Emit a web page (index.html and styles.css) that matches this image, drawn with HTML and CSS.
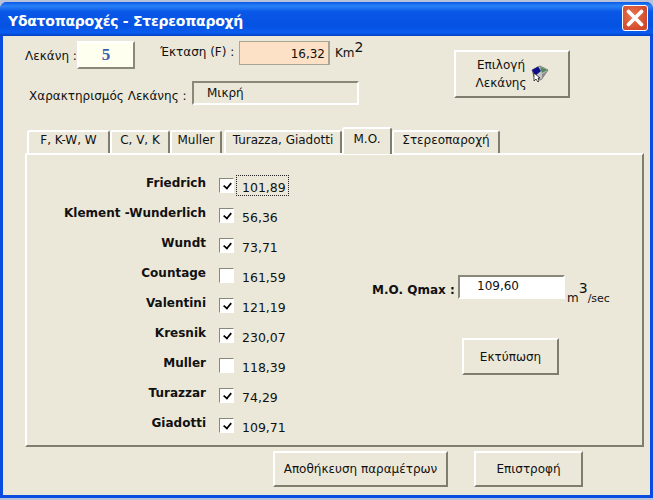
FILE: index.html
```html
<!DOCTYPE html>
<html lang="el">
<head>
  <meta charset="UTF-8" />
  <title>Υδατοπαροχές - Στερεοπαροχή</title>
  <link rel="stylesheet" href="styles.css">
</head>
<body>
  <div class="window">
    <div class="titlebar">
      <span class="title">Υδατοπαροχές - Στερεοπαροχή</span>
      <button class="close">
        <svg width="20" height="20" viewBox="0 0 20 20"><path d="M3.5 3.5 L16.5 16.5 M16.5 3.5 L3.5 16.5" stroke="#fff" stroke-width="3.8" stroke-linecap="round"/></svg>
      </button>
    </div>

    <div class="form">
      <div class="top">
        <div class="top-fields">
          <div class="line-one">
            <span class="lbl-basin">Λεκάνη :</span>
            <div class="basin-no">5</div>
            <span class="lbl-area">Έκταση (F) :</span>
            <div class="area">16,32</div>
            <span class="km">Km<sup>2</sup></span>
          </div>
          <div class="line-two">
            <span class="lbl-type">Χαρακτηρισμός Λεκάνης :</span>
            <div class="type">Μικρή</div>
          </div>
        </div>
        <button class="btn pick">
          <span>Επιλογή<br>Λεκάνης</span>
          <svg width="18" height="18" viewBox="0 0 18 18">
            <path d="M1 5 L9 1 L17 5 L10 15 L3 12 Z" fill="#c4c4c4" stroke="#444" stroke-width="0.6"/>
            <path d="M1 5 L7 1.5 L10 6 L4 11 Z" fill="#10108c"/>
            <path d="M9 2 L16.5 5 L11 8 Z" fill="#4c8a5a"/>
            <path d="M11 9 L16.5 6 L11 14 Z" fill="#8a8a8a"/>
            <path d="M3 8 L3 16 L5 14 L7 17 L8 16 L7 13 L9 13 Z" fill="#fff" stroke="#000" stroke-width="0.7"/>
          </svg>
        </button>
      </div>

      <div class="tabs">
        <div class="tab tab-a">F, K-W, W</div>
        <div class="tab tab-b">C, V, K</div>
        <div class="tab tab-c">Muller</div>
        <div class="tab tab-d">Turazza, Giadotti</div>
        <div class="tab tab-e active">M.O.</div>
        <div class="tab tab-f">Στερεοπαροχή</div>
      </div>

      <div class="page">
        <div class="list">
          <div class="row"><b>Friedrich</b><i class="check on"></i><span class="val focus">101,89</span></div>
          <div class="row"><b>Klement -Wunderlich</b><i class="check on"></i><span class="val">56,36</span></div>
          <div class="row"><b>Wundt</b><i class="check on"></i><span class="val">73,71</span></div>
          <div class="row"><b>Countage</b><i class="check"></i><span class="val">161,59</span></div>
          <div class="row"><b>Valentini</b><i class="check on"></i><span class="val">121,19</span></div>
          <div class="row"><b>Kresnik</b><i class="check on"></i><span class="val">230,07</span></div>
          <div class="row"><b>Muller</b><i class="check"></i><span class="val">118,39</span></div>
          <div class="row"><b>Turazzar</b><i class="check on"></i><span class="val">74,29</span></div>
          <div class="row"><b>Giadotti</b><i class="check on"></i><span class="val">109,71</span></div>
        </div>
        <div class="result">
          <div class="qmax">
            <b>M.O. Qmax :</b>
            <div class="qmax-val">109,60</div>
            <span class="unit">m<sup>3</sup><small>/sec</small></span>
          </div>
          <button class="btn print">Εκτύπωση</button>
        </div>
      </div>

      <div class="actions">
        <button class="btn save">Αποθήκευση παραμέτρων</button>
        <button class="btn back">Επιστροφή</button>
      </div>
    </div>
  </div>
</body>
</html>
```

FILE: styles.css
```css
* { box-sizing: border-box; }

html, body {
  margin: 0;
  height: 500px;
  overflow: hidden;
}

body {
  background: #b8c2da;
  font-family: "DejaVu Sans", sans-serif;
  font-size: 12px;
  color: #111;
  padding-top: 2px;
}

.window {
  width: 653px;
  height: 496px;
  background: #0a4be0;
  border-radius: 7px 7px 0 0;
  padding: 0 3px 3px 3px;
}

/* Title bar */
.titlebar {
  height: 34px;
  margin: 0 -3px;
  padding: 0 5px 0 8px;
  border-radius: 7px 7px 0 0;
  background: linear-gradient(#0a5ae6 0%, #2a82f6 12%, #0a58e8 28%, #0552e2 70%, #0a5cf0 90%, #0340c4 100%);
  display: flex;
  align-items: center;
  justify-content: space-between;
}

.title {
  color: #fff;
  font-size: 14px;
  font-weight: bold;
  letter-spacing: -0.26px;
  padding-top: 3px;
}

.close {
  width: 26px;
  height: 26px;
  padding: 0;
  border: 1px solid #fff;
  border-radius: 3px;
  background: radial-gradient(circle at 40% 40%, #e8774f, #d2482a 75%);
  display: flex;
  align-items: center;
  justify-content: center;
  margin-top: -3px;
}

/* Form */
.form {
  height: 459px;
  background: #ebe8d9;
  padding: 5px 0 0 22px;
}

.top {
  display: flex;
  height: 82px;
}

.top-fields {
  width: 429px;
}

.line-one {
  display: flex;
  align-items: flex-start;
  height: 40px;
}

.lbl-basin { margin-top: 8px; width: 52px; }

.basin-no {
  width: 58px;
  height: 28px;
  background: #fffff0;
  border: 2px solid;
  border-color: #fff #8a8878 #8a8878 #fff;
  color: #3a5fb0;
  font: bold 17px "Liberation Serif", serif;
  text-align: center;
  line-height: 24px;
}

.lbl-area { margin: 4px 0 0 25px; width: 79px; }

.area {
  width: 91px;
  height: 24px;
  background: #fde1c6;
  border: 1px solid #a8a692;
  border-width: 1px 2px 1px 1px;
  text-align: right;
  padding-right: 3px;
  line-height: 24px;
}

.km { margin: 5px 0 0 5px; font-size: 12px; }
.km sup { font-size: 14px; line-height: 0; }

.line-two {
  display: flex;
  align-items: center;
  height: 24px;
  margin-left: 4px;
}

.lbl-type { width: 163px; margin-top: 6px; }

.type {
  width: 167px;
  height: 24px;
  border: 2px solid;
  border-color: #8a8878 #fff #fff #8a8878;
  padding-left: 13px;
  line-height: 20px;
}

.btn {
  background: #ebe8d9;
  border: 2px solid;
  border-color: #fff #7f7d6e #7f7d6e #fff;
  font-family: "DejaVu Sans", sans-serif;
  font-size: 12px;
  color: #111;
  padding: 0;
}

.pick {
  width: 116px;
  height: 48px;
  margin-top: 9px;
  display: flex;
  align-items: center;
  justify-content: center;
  gap: 4px;
  line-height: 18px;
}

/* Tabs */
.tabs {
  display: flex;
  align-items: flex-end;
  height: 30px;
  margin-left: 2px;
}

.tab {
  height: 23px;
  background: #ebe8d9;
  border-top: 2px solid #fff;
  border-left: 2px solid #fff;
  border-right: 2px solid #7f7d6e;
  border-radius: 3px 3px 0 0;
  text-align: center;
  line-height: 17px;
}

.tab-a { width: 83px; }
.tab-b { width: 60px; }
.tab-c { width: 52px; margin-right: 2px; }
.tab-d { width: 118px; }
.tab-e { width: 50px; }
.tab-f { width: 108px; }

.tab.active {
  height: 27px;
  line-height: 20px;
  position: relative;
  top: 1px;
}

/* Tab page */
.page {
  width: 619px;
  height: 294px;
  border: 2px solid;
  border-color: #fff #7f7d6e #7f7d6e #fff;
  display: flex;
}

.list {
  width: 263px;
  padding-top: 15px;
}

.row {
  display: flex;
  align-items: center;
  height: 30px;
}

.row b {
  width: 179px;
  text-align: right;
  position: relative;
  top: -2px;
}

.check {
  width: 15px;
  height: 15px;
  margin-left: 13px;
  background: #fff;
  border: 1px solid;
  border-color: #8a8878 #fff #fff #8a8878;
  position: relative;
}

.check.on::after {
  content: "";
  position: absolute;
  left: 3px;
  top: 3px;
  width: 7px;
  height: 4px;
  border-left: 2px solid #000;
  border-bottom: 2px solid #000;
  transform: rotate(-50deg) scale(0.85);
}

.val {
  width: 53px;
  height: 21px;
  margin-left: 2px;
  padding: 4px 0 0 5px;
  border: 1px dotted transparent;
  font-size: 12.5px;
}

.val.focus { border-color: #222; }

.result {
  padding-top: 120px;
}

.qmax {
  display: flex;
  align-items: center;
  height: 24px;
  margin-left: 82px;
}

.qmax b { width: 86px; position: relative; top: 3px; }

.qmax-val {
  width: 107px;
  height: 24px;
  background: #fff;
  border: 2px solid;
  border-color: #8a8878 #fff #fff #8a8878;
  padding-left: 17px;
  line-height: 18px;
}

.unit { margin: 18px 0 0 2px; font-size: 12px; white-space: nowrap; }
.unit sup { font-size: 14px; line-height: 0; vertical-align: 9px; }
.unit small { font-size: 11px; }

.print {
  display: block;
  width: 97px;
  height: 37px;
  margin: 39px 0 0 172px;
}

/* Bottom buttons */
.actions {
  display: flex;
  gap: 26px;
  margin: 4px 0 0 248px;
}

.save { width: 175px; height: 36px; }
.back { width: 109px; height: 36px; }
```
